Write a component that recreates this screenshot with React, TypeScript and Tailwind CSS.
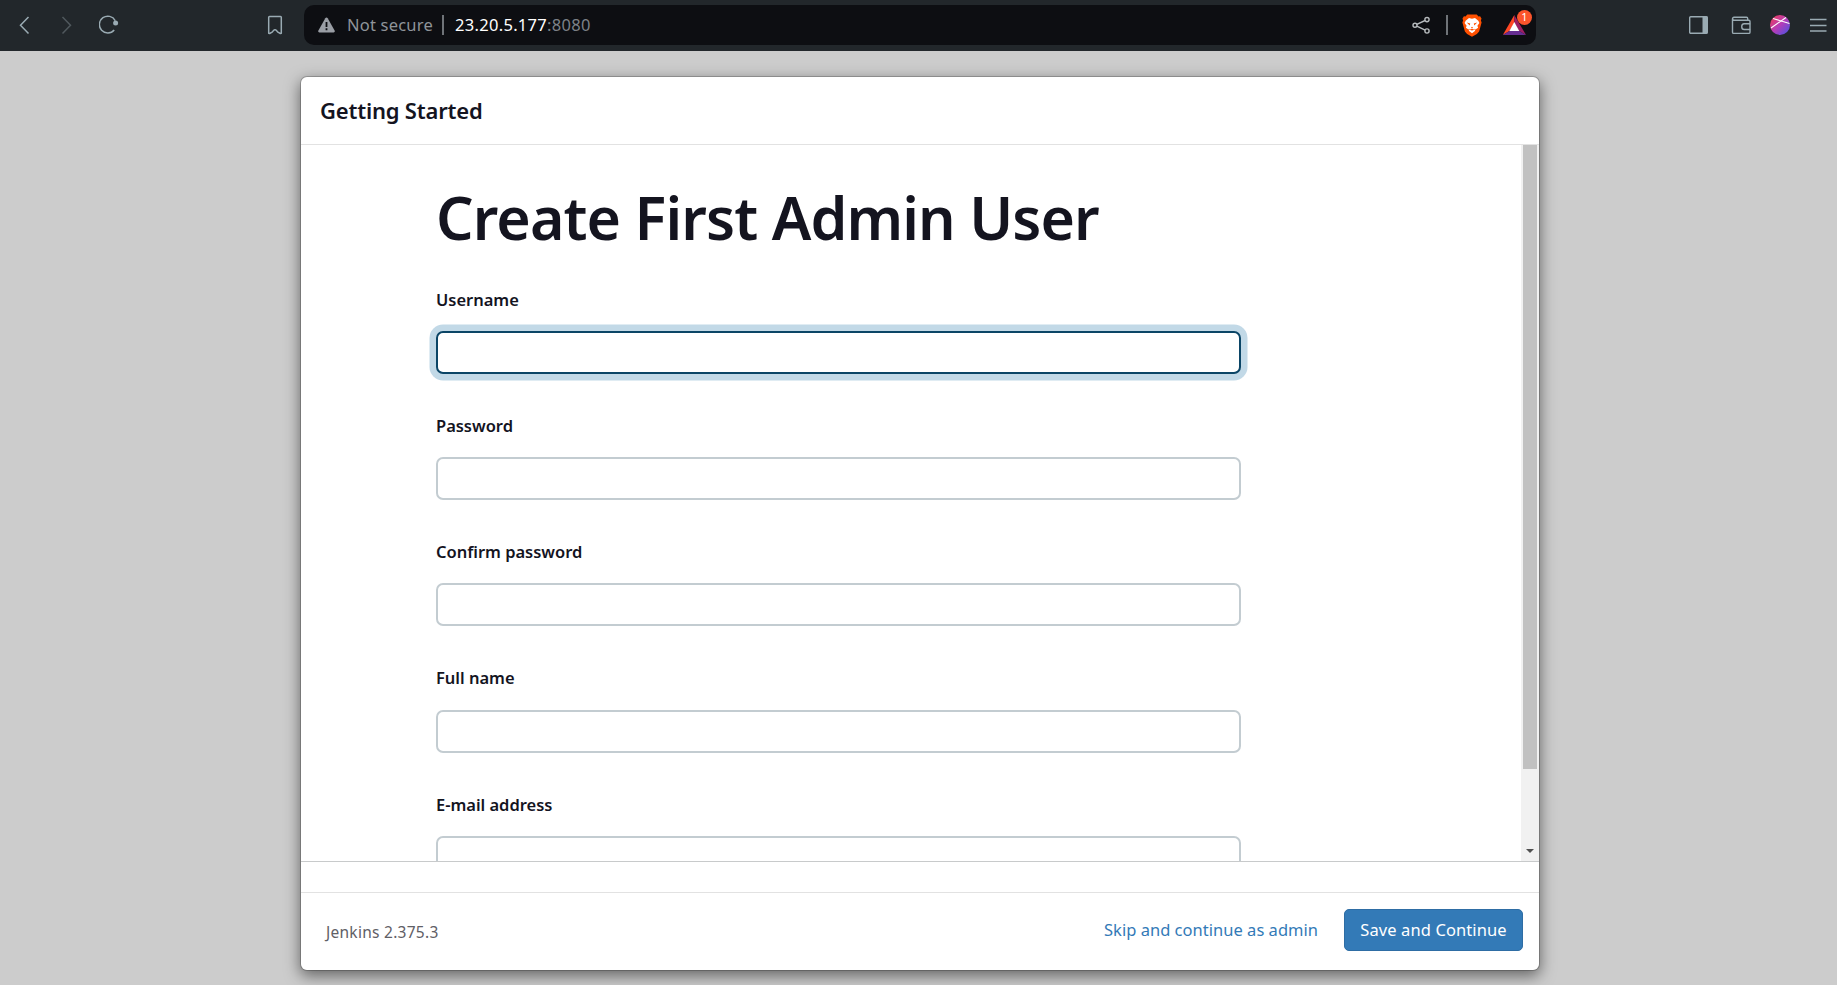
const glyph = "stroke-[#9aabb3] fill-none";

function Toolbar() {
  return (
    <header className="flex h-[51px] shrink-0 items-start bg-[#22272b] pt-[5px]">
      <div className="flex h-10 w-[304px] shrink-0 items-center">
        <svg className={`ml-4 h-5 w-4 ${glyph}`} viewBox="0 0 16 20" strokeWidth="1.5">
          <path d="M12.5 2 4.500 10.300l8 8.200" />
        </svg>
        <svg className="ml-[26px] h-5 w-4 fill-none stroke-[#50585d]" viewBox="0 0 16 20" strokeWidth="1.5">
          <path d="m4.500 2 8 8.300-8 8.200" />
        </svg>
        <svg className={`ml-[25px] h-5 w-5 ${glyph}`} viewBox="0 0 20 20" strokeWidth="1.5">
          <path d="M15.200 15A8.400 8.400 0 1 1 16.200 5.600" />
          <circle cx="16.600" cy="8" r="2.500" className="fill-[#9aabb3] stroke-none" />
        </svg>
        <svg className={`ml-[148px] h-5 w-4 ${glyph}`} viewBox="0 0 16 20" strokeWidth="1.5">
          <path d="M1.700 2.200c0-.5.300-.8.800-.8h11c.5 0 .8.300.8.800v16l-1 .3c-1.800-.8-3.500-2-4-3.200-.5-.8-2.100-.8-2.600 0-.5 1.200-2.200 2.400-4 3.200l-1-.3z" strokeLinejoin="round" />
        </svg>
      </div>
      <div className="flex h-10 w-[1232px] shrink-0 items-center rounded-[10px] bg-[#0d0e12]">
        <svg className="ml-[14px] h-4 w-[17px]" viewBox="0 0 17 16">
          <path d="M8.500.5c.5 0 .9.200 1.200.7l6.900 12.400c.5.9 0 1.800-1 1.800H1.400c-1 0-1.500-.9-1-1.800L7.300 1.200C7.600.7 8 .5 8.500.5z" fill="#9a9ea5" />
          <path d="M8.500 5v5M8.500 11.300v2" stroke="#0d0e12" strokeWidth="1.8" />
        </svg>
        <span className="ml-3 w-[95px] text-[16.5px] tracking-[0.2px] whitespace-nowrap text-[#8f9499]">Not secure</span>
        <span className="h-5 w-0.5 bg-[#6f7378]" />
        <span className="ml-[11px] text-[16.5px] tracking-[0.3px] text-white">
          23.20.5.177<span className="text-[#7d8187]">:8080</span>
        </span>
        <svg className="ml-auto h-5 w-5 fill-none stroke-[#b6babd]" viewBox="0 0 20 20" strokeWidth="1.4">
          <circle cx="5" cy="10.300" r="2" />
          <circle cx="17" cy="4.600" r="2.100" />
          <circle cx="17" cy="16" r="2.100" />
          <path d="m6.800 9.400 8.300-3.900M6.800 11.200l8.300 3.900" />
        </svg>
        <span className="ml-4 h-5 w-0.5 bg-[#6f7378]" />
        <svg className="ml-[14px] h-6 w-5" viewBox="0 -1 20 24">
          <path d="M5.300.5h9.400l1.800 2 1.600-.2 1.400 2.300-.6 1.800.7 2-2.500 9-2.200 2.700-4.900 2.600-4.900-2.600-2.200-2.700-2.500-9 .7-2L.5 4.600l1.400-2.300 1.600.2z" fill="#ff5000" />
          <path d="m7 4 3 .8L13 4l3.300 2.800L17.400 9l-2 2.800.7 2-2.600 1.800L12 14.800l1.300 2L10 19.200l-3.300-2.400 1.300-2-1.500.8-2.600-1.800.7-2-2-2.800 1.100-2.200z" fill="#fff" />
          <path d="m4.800 8.600 3.400.9-.5 2zM15.200 8.600l-3.400.9.5 2zM10 12.800l1 .8-1 .9-1-.9zM7.400 15.800l2.600-1 2.600 1-2.600.8z" fill="#ff5000" />
        </svg>
        <div className="relative ml-5 mr-[10px] flex h-10 w-6 items-center">
          <svg className="h-5 w-6" viewBox="0 0 24 20">
            <path d="M12.300 0v8l-5 8-6.500 4z" fill="#ff4724" />
            <path d="M12.300 0v8l5 8 6.700 4z" fill="#9e1f63" />
            <path d="m.8 20 6.500-4h10l6.700 4z" fill="#662d91" />
            <path d="m12.300 7 5 9h-10z" fill="#fff" />
          </svg>
          <span className="absolute left-[15px] top-[5px] flex h-[15px] w-[15px] items-center justify-center rounded-full bg-[#fb542b] text-[11px] text-white">1</span>
        </div>
      </div>
      <div className="flex h-10 grow items-center">
        <svg className={`ml-[152px] h-5 w-5 ${glyph}`} viewBox="0 0 20 20" strokeWidth="1.4">
          <rect x="1.7" y="1.7" width="17.600" height="16.600" rx="1" />
          <path d="M14.500 1.500h5V18.500h-5z" className="fill-[#9aabb3] stroke-none" />
        </svg>
        <svg className={`ml-[23px] h-5 w-5 ${glyph}`} viewBox="0 0 20 20" strokeWidth="1.4">
          <path d="M1.500 3.500v13.700c0 .8.400 1.200 1.200 1.200h15.100c.8 0 1.200-.4 1.200-1.200V6.500c0-.8-.4-1.200-1.200-1.200H3C1.100 5.300 1.100 2.300 3 2.300h12.500c.8 0 1.200.5 1.200 1.200v1.800" />
          <path d="M19.200 8.800h-6c-3.300 0-3.300 5.700 0 5.700h6" />
        </svg>
        <svg className="ml-[19px] h-5 w-5" viewBox="0 0 20 20">
          <defs>
            <linearGradient id="avatar" x1="0" y1="0" x2="1" y2="1">
              <stop offset=".15" stopColor="#e23d6c" />
              <stop offset=".5" stopColor="#b53cb8" />
              <stop offset="1" stopColor="#3f55e6" />
            </linearGradient>
          </defs>
          <circle cx="10" cy="10" r="10" fill="url(#avatar)" />
          <path d="M1 13 16 2.500M3 3.500l16.500 5" stroke="#fff" strokeWidth="1.100" />
        </svg>
        <svg className={`ml-5 h-5 w-[17px] ${glyph}`} viewBox="0 0 17 20" strokeWidth="1.500">
          <path d="M0 4.600h16.500M0 10.400h16.500M0 16.100h16.500" />
        </svg>
      </div>
    </header>
  );
}

function Field({ label, focused = false }: { label: string; focused?: boolean }) {
  return (
    <div className="h-[126.25px]">
      <label className="block h-[42.1px] text-[16.5px] leading-[22px] font-semibold tracking-[-0.02px]">{label}</label>
      <input
        className={
          focused
            ? "block h-[43px] w-[805px] rounded-[7px] border-2 border-[#0b4566] bg-white ring-[6.5px] ring-[#c2d9e7] outline-none"
            : "block h-[43px] w-[805px] rounded-[7px] border-2 border-[#c3ccd1] bg-white outline-none"
        }
      />
    </div>
  );
}

export default function App() {
  return (
    <div className="flex h-[985px] w-[1837px] flex-col overflow-hidden bg-[#cccccc] font-['Noto_Sans',sans-serif] text-[#14141f]">
      <Toolbar />
      <main className="ml-[300px] mt-[25px] flex h-[895px] w-[1240px] flex-col overflow-hidden rounded-[7px] border border-black/20 bg-white bg-clip-padding shadow-[0_5px_15px_rgba(0,0,0,0.5)]">
        <div className="flex h-[68px] shrink-0 items-center border-b border-[#e2e2e2] pl-[19px] text-[22px] font-semibold tracking-[-0.2px]">
          Getting Started
        </div>
        <div className="flex h-[717px] shrink-0 border-b border-[#c8cacb]">
          <div className="h-[716px] grow overflow-hidden pl-[135px]">
            <h1 className="mt-[33px] h-[81px] text-[59px] leading-[78px] font-semibold tracking-[-0.9px] whitespace-nowrap">Create First Admin User</h1>
            <div className="pt-[29.7px]">
              <Field label="Username" focused />
              <Field label="Password" />
              <Field label="Confirm password" />
              <Field label="Full name" />
              <Field label="E-mail address" />
            </div>
          </div>
          <div className="flex w-[18px] flex-col items-center justify-between bg-[#f1f1f1]">
            <div className="h-[624px] w-[14px] bg-[#c1c1c1]" />
            <svg className="mb-2 h-1 w-2" viewBox="0 0 8 4">
              <path d="M0 0h8L4 4z" fill="#505050" />
            </svg>
          </div>
        </div>
        <div className="h-[31px] shrink-0 border-b border-[#e2e2e2]" />
        <footer className="flex grow items-center pl-[25px] pr-4">
          <span className="mt-[3px] text-[15.5px] tracking-[0.27px] text-[#5f6066]">Jenkins 2.375.3</span>
          <button className="mb-[3px] ml-auto text-[16.5px] tracking-[0.02px] text-[#337ab7]">Skip and continue as admin</button>
          <button className="mb-[3px] ml-[26px] h-[42px] w-[179px] rounded-[5px] border border-[#2e6da4] bg-[#337ab7] text-[16.5px] tracking-[0.1px] text-white">
            Save and Continue
          </button>
        </footer>
      </main>
    </div>
  );
}
